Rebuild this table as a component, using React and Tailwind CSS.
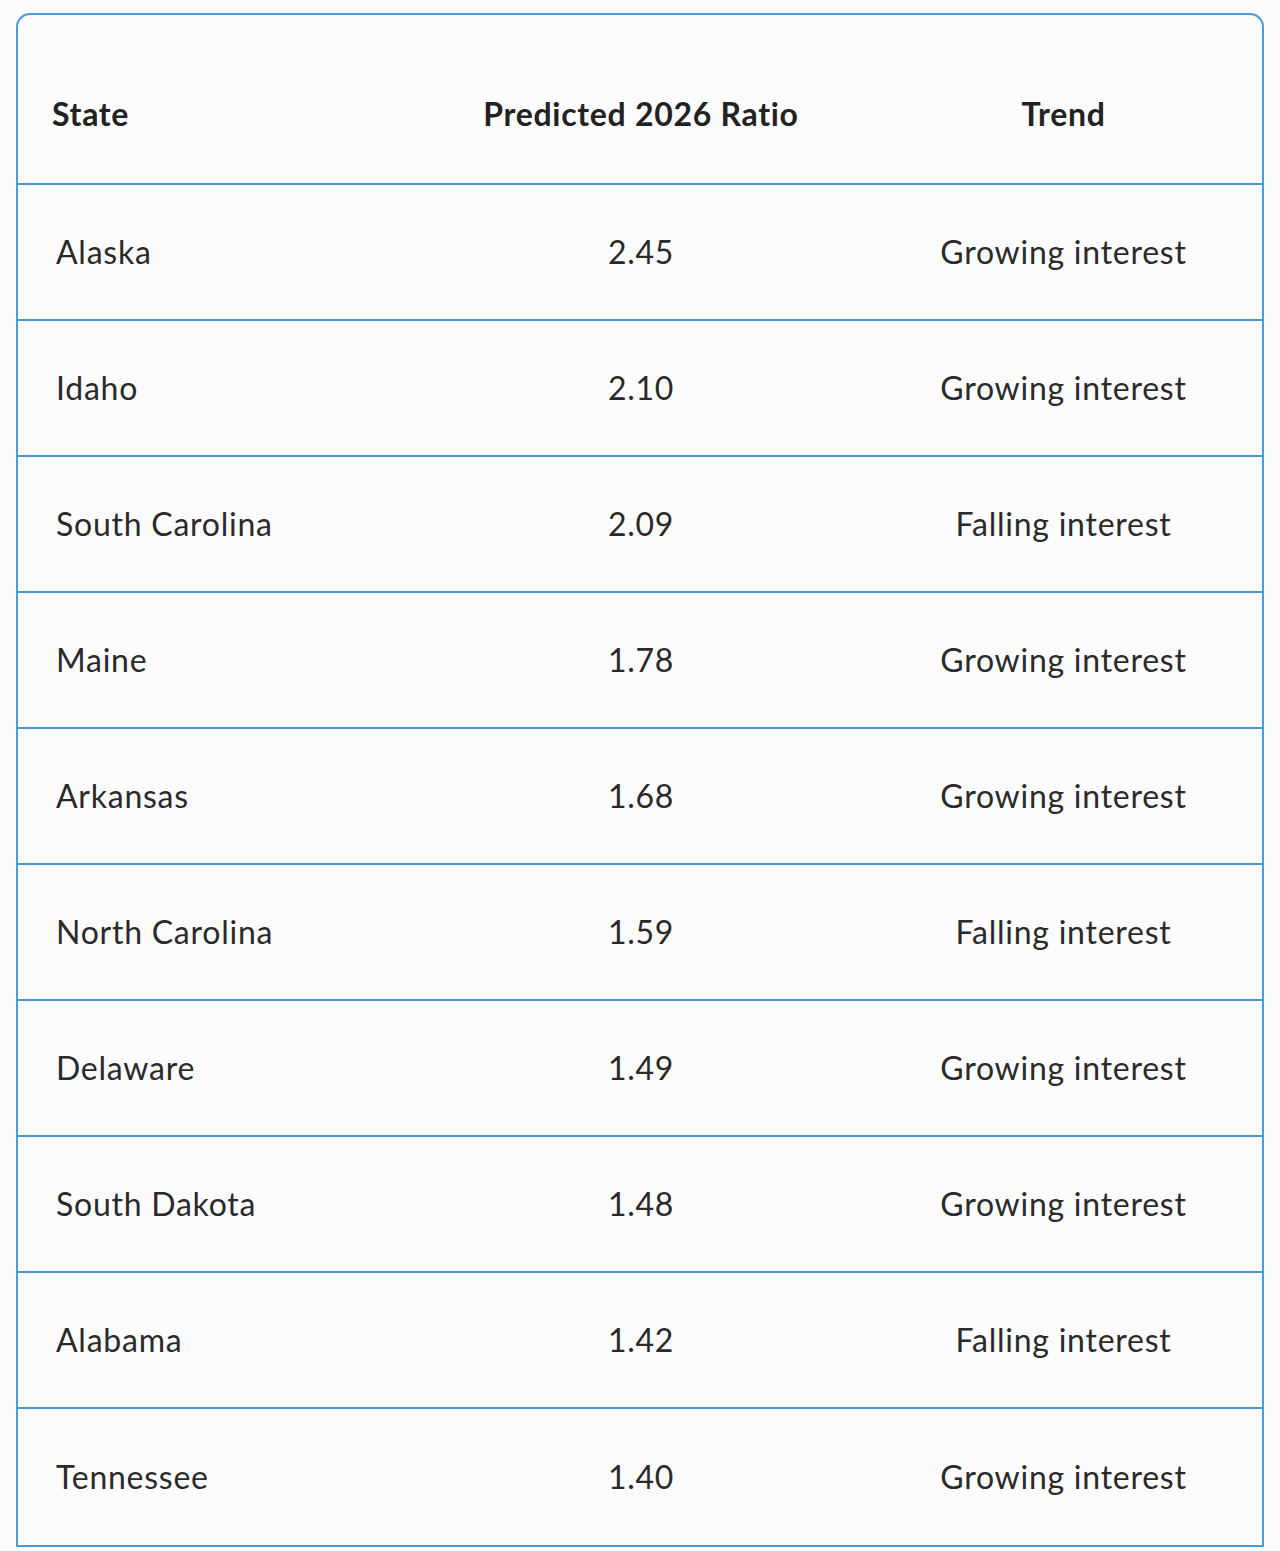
const rows = [
  ["Alaska", "2.45", "Growing interest"],
  ["Idaho", "2.10", "Growing interest"],
  ["South Carolina", "2.09", "Falling interest"],
  ["Maine", "1.78", "Growing interest"],
  ["Arkansas", "1.68", "Growing interest"],
  ["North Carolina", "1.59", "Falling interest"],
  ["Delaware", "1.49", "Growing interest"],
  ["South Dakota", "1.48", "Growing interest"],
  ["Alabama", "1.42", "Falling interest"],
  ["Tennessee", "1.40", "Growing interest"],
];

export default function App() {
  return (
    <div className="min-h-screen bg-[#fcfcfc] px-4 pt-[13px] font-['Lato',sans-serif]">
      <div className="border-2 border-[#4a9ae0] rounded-t-[14px] bg-[#fcfcfc] divide-y-2 divide-[#4a9ae0]">
        {/* header */}
        <div className="grid grid-cols-[399px_448px_1fr] h-[170px] items-center pt-[30px] text-[32px] tracking-[0.7px] font-bold text-[#222]">
          <div className="pl-[34px]">State</div>
          <div className="text-center">Predicted 2026 Ratio</div>
          <div className="text-center">Trend</div>
        </div>

        {rows.map(([state, ratio, trend]) => (
          <div
            key={state}
            className="grid grid-cols-[399px_448px_1fr] h-[136px] items-center text-[32px] tracking-[0.75px] text-[#2a2a2a]"
          >
            <div className="pl-[38px]">{state}</div>
            <div className="text-center">{ratio}</div>
            <div className="text-center">{trend}</div>
          </div>
        ))}
      </div>
    </div>
  );
}
